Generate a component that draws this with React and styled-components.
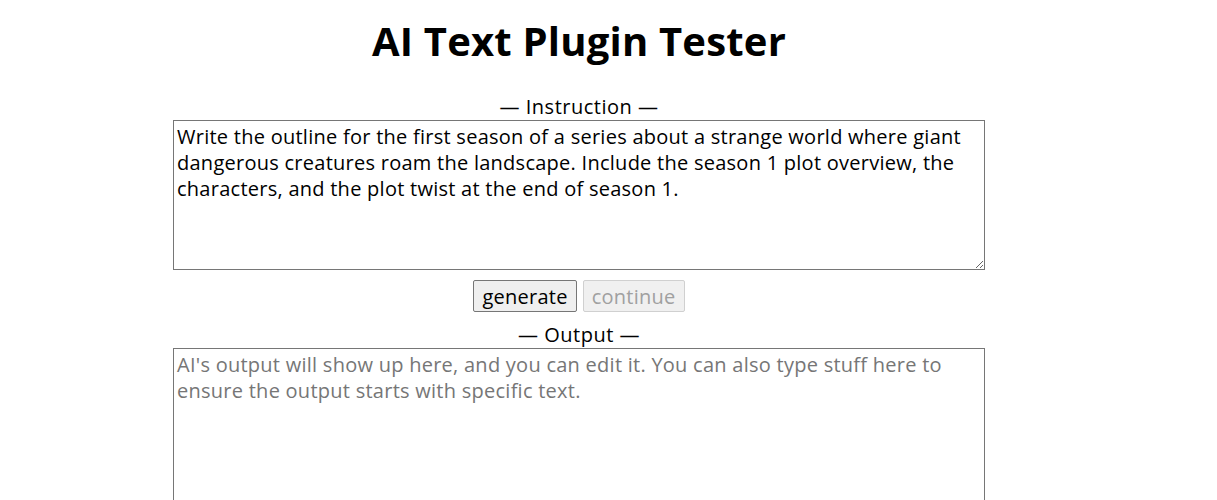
import { createGlobalStyle } from "styled-components";
import styled from "styled-components";

const GlobalStyle = createGlobalStyle`
  body {
    margin: 0;
    background: #ffffff;
    font-family: "Open Sans", "Noto Sans", sans-serif;
    color: #000;
  }
`;

const Page = styled.div`
  width: 1158px;
  text-align: center;
`;

const Title = styled.h1`
  margin: 13px 0 25px;
  font-size: 40px;
  line-height: 56px;
  font-weight: 700;
  letter-spacing: 0.2px;
`;

const Label = styled.div`
  font-size: 20px;
  line-height: 26px;
  letter-spacing: 0.5px;
`;

const Field = styled.textarea`
  display: block;
  box-sizing: border-box;
  margin: 0 auto;
  width: 812px;
  height: ${(p) => p.$height}px;
  padding: 3px 3px 1px;
  border: 1px solid #767676;
  border-radius: 0;
  font-family: inherit;
  font-size: 20px;
  line-height: 26px;
  letter-spacing: 0.26px;
  color: #000;
  resize: vertical;
  &::placeholder {
    color: #767676;
  }
`;

const Actions = styled.div`
  display: flex;
  justify-content: center;
  gap: 6px;
  margin: 10px 0;
`;

const Button = styled.button`
  font-family: inherit;
  font-size: 20px;
  line-height: 26px;
  letter-spacing: 0.25px;
  padding: 3px 8px 1px;
  border: 1px solid #767676;
  border-radius: 2px;
  background: #efefef;
  color: #000;
  &:disabled {
    color: #a0a0a0;
    border-color: #d0d0d0;
    background: #f0f0f0;
  }
`;

export default function App() {
  return (
    <Page>
      <GlobalStyle />
      <Title>AI Text Plugin Tester</Title>
      <Label>— Instruction —</Label>
      <Field
        $height={150}
        defaultValue="Write the outline for the first season of a series about a strange world where giant dangerous creatures roam the landscape. Include the season 1 plot overview, the characters, and the plot twist at the end of season 1."
      />
      <Actions>
        <Button>generate</Button>
        <Button disabled>continue</Button>
      </Actions>
      <Label>— Output —</Label>
      <Field
        $height={300}
        placeholder="AI's output will show up here, and you can edit it. You can also type stuff here to ensure the output starts with specific text."
      />
    </Page>
  );
}
